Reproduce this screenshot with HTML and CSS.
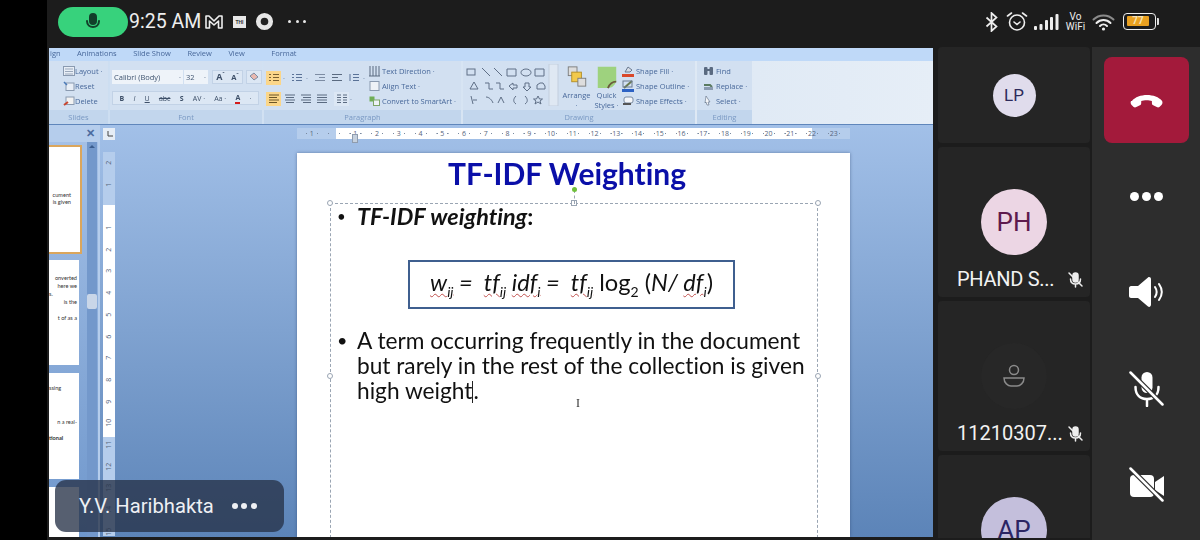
FILE: index.html
```html
<!DOCTYPE html>
<html lang="en">
<head>
<meta charset="utf-8">
<title>Meeting</title>
<link rel="stylesheet" href="styles.css">
</head>
<body>
<div class="phone">
  <div class="cutout"></div>
  <div class="main">
    <header class="status">
      <div class="status-left">
        <div class="mic-pill">
          <svg width="16" height="18" viewBox="0 0 16 18" fill="none" stroke="#123f2a" stroke-width="2" stroke-linecap="round"><rect x="5" y="1" width="6" height="10" rx="3" fill="#123f2a"/><path d="M2 8c0 4 3 6 6 6s6-2 6-6"/></svg>
        </div>
        <span class="clock">9:25 AM</span>
        <svg class="st-m" width="18" height="14" viewBox="0 0 18 14" fill="none" stroke="#eee" stroke-width="1.6" stroke-linejoin="round"><path d="M1 1h3l5 5 5-5h3v12h-3.5V6L9 10 4.500 6v7H1z"/></svg>
        <span class="st-th">THI</span>
        <svg class="st-ring" width="19" height="19" viewBox="0 0 20 20" fill="#222" stroke="#e6e6e6" stroke-width="5"><circle cx="10" cy="10" r="6.500"/></svg>
        <span class="st-dots"><i></i><i></i><i></i></span>
      </div>
      <div class="status-right">
        <svg width="14" height="20" viewBox="0 0 14 20" fill="none" stroke="#eee" stroke-width="1.700"><path d="M1.500 5.500l10 9-5 4.500V1l5 4.500-10 9"/></svg>
        <svg class="st-alarm" width="22" height="21" viewBox="0 0 22 21" fill="none" stroke="#eee" stroke-width="1.600" stroke-linecap="round"><circle cx="11" cy="11.500" r="7.500"/><path d="M8 11l3 2.500 3-2.500M1.500 5l4-3M20.500 5l-4-3"/></svg>
        <svg class="st-signal" width="25" height="17" viewBox="0 0 25 17" fill="#eee"><rect x="0" y="13" width="3" height="4" rx="1"/><rect x="5.500" y="11" width="3" height="6" rx="1"/><rect x="11" y="7" width="3" height="10" rx="1"/><rect x="16" y="4" width="3" height="13" rx="1"/><rect x="21.500" y="1" width="3" height="16" rx="1"/></svg>
        <span class="st-vo"><span>Vo</span><span>WiFi</span></span>
        <svg class="st-wifi" width="23" height="18" viewBox="0 0 23 18" fill="none" stroke-linecap="round"><path d="M1.500 6.500C7 1 16 1 21.500 6.500" stroke="#8a8a8a" stroke-width="2"/><path d="M4.500 10c4-4 10-4 14 0M8 13c2-2 5-2 7 0" stroke="#eee" stroke-width="2"/><circle cx="11.500" cy="16" r="1.600" fill="#eee"/></svg>
        <div class="battery"><div class="bat-body"><span class="bat-fill">77</span></div><i class="bat-tip"></i></div>
      </div>
    </header>

    <div class="content">
      <section class="share">
        <div class="ribbon">
          <nav class="tabs">
            <span>ign</span><span>Animations</span><span>Slide Show</span><span>Review</span><span>View</span><span class="tab-format">Format</span>
          </nav>
          <div class="groups">
            <div class="group g-slides">
              <div class="g-body rows">
                <div class="row"><svg class="ic" width="12" height="10" viewBox="0 0 12 10"><rect x=".5" y=".5" width="11" height="9" fill="#e8eef6" stroke="#8a9ab0"/><path d="M2 3h8M2 5.500h8M2 8h8" stroke="#9aa8bb"/></svg>Layout ·</div>
                <div class="row"><svg class="ic" width="12" height="10" viewBox="0 0 12 10"><rect x="3" y="2" width="8" height="7.500" fill="#e8eef6" stroke="#8a9ab0"/><path d="M1 1l3 3" stroke="#4a7ab8" stroke-width="1.500"/></svg>Reset</div>
                <div class="row"><svg class="ic" width="12" height="10" viewBox="0 0 12 10"><rect x="3" y="1" width="8" height="7.500" fill="#f2f2f2" stroke="#8a9ab0"/><path d="M1 9l4-3" stroke="#c8452f" stroke-width="2"/></svg>Delete</div>
              </div>
              <div class="g-label">Slides</div>
            </div>
            <div class="group g-font">
              <div class="g-body font-body">
                <div class="font-row">
                  <span class="combo combo-font">Calibri (Body)<b>·</b></span>
                  <span class="combo combo-size">32<b>·</b></span>
                  <span class="btnset fs"><strong>A<sup>ˆ</sup></strong><strong class="sm">A<sup>ˇ</sup></strong></span>
                  <span class="btnset clear"><svg width="12" height="12" viewBox="0 0 12 12"><path d="M2 5l4-3 4 4-4 3z" fill="#e8b8b0" stroke="#7d8ca3"/></svg></span>
                </div>
                <div class="font-row font-row2">
                  <span class="btnset fmt"><b>B</b><i>I</i><u>U</u><s>abc</s><b>S</b><span>AV ·</span><span>Aa ·</span><span class="red-a">A</span><span>·</span></span>
                </div>
              </div>
              <div class="g-label">Font</div>
            </div>
            <div class="group g-para">
              <div class="g-body para-body">
                <div class="para-left">
                  <div class="para-row">
                    <span class="pb on"><svg width="10" height="9" viewBox="0 0 10 9" stroke="#7a6030"><path d="M0 1.500h2M4 1.500h6M0 4.500h2M4 4.500h6M0 7.500h2M4 7.500h6"/></svg></span><em>·</em>
                    <span class="pb"><svg width="10" height="9" viewBox="0 0 10 9" stroke="#5a7297"><path d="M0 1.500h2M4 1.500h6M0 4.500h2M4 4.500h6M0 7.500h2M4 7.500h6"/></svg></span><em>·</em>
                    <span class="pb"><svg width="10" height="9" viewBox="0 0 10 9" stroke="#7d8ca3"><path d="M0 1.500h10M4 4.500h6M0 7.500h10"/></svg></span>
                    <span class="pb"><svg width="10" height="9" viewBox="0 0 10 9" stroke="#5a6a80"><path d="M0 1.500h10M0 4.500h6M0 7.500h10"/></svg></span>
                    <span class="pb"><svg width="10" height="9" viewBox="0 0 10 9" stroke="#5a7297"><path d="M1 1v7M4 1.500h6M4 4.500h6M4 7.500h6"/></svg></span><em>·</em>
                  </div>
                  <div class="para-row para-row2">
                    <span class="pb on"><svg width="10" height="9" viewBox="0 0 10 9" stroke="#6b5526"><path d="M0 1h10M0 3.500h8M0 6h10M0 8.500h8"/></svg></span>
                    <span class="pb"><svg width="10" height="9" viewBox="0 0 10 9" stroke="#5a6a80"><path d="M0 1h10M1 3.500h8M0 6h10M1 8.500h8"/></svg></span>
                    <span class="pb"><svg width="10" height="9" viewBox="0 0 10 9" stroke="#5a6a80"><path d="M0 1h10M2 3.500h8M0 6h10M2 8.500h8"/></svg></span>
                    <span class="pb"><svg width="10" height="9" viewBox="0 0 10 9" stroke="#5a6a80"><path d="M0 1h10M0 3.500h10M0 6h10M0 8.500h10"/></svg></span>
                    <span class="pb pb-col"><svg width="10" height="9" viewBox="0 0 10 9" stroke="#5a6a80"><path d="M0 1h4M6 1h4M0 3.500h4M6 3.500h4M0 6h4M6 6h4M0 8.500h4M6 8.500h4"/></svg></span><em>·</em>
                  </div>
                </div>
                <div class="rows">
                  <div class="row"><svg class="ic" width="11" height="12" viewBox="0 0 11 12" stroke="#5a6a80"><path d="M1 1v10M4 1v10M7 1v10M10 1v10M0 11h11"/></svg>Text Direction ·</div>
                  <div class="row"><svg class="ic" width="11" height="10" viewBox="0 0 11 10"><rect x="1" y=".5" width="9" height="9" fill="#eef2f7" stroke="#8a9ab0"/></svg>Align Text ·</div>
                  <div class="row"><svg class="ic" width="11" height="10" viewBox="0 0 11 10"><rect x=".5" y=".5" width="5" height="5" fill="#6fae56"/><rect x="4.500" y="4" width="6" height="5.500" fill="#eef2f7" stroke="#7da568"/></svg>Convert to SmartArt ·</div>
                </div>
              </div>
              <div class="g-label">Paragraph</div>
            </div>
            <div class="group g-draw">
              <div class="g-body draw-body">
                <svg class="gallery" width="94" height="42" viewBox="0 0 94 42" fill="none" stroke="#5f6f86"><rect x="2" y="5" width="8" height="6"/><path d="M17 4l8 8M29 4l8 8M42 5h9v7h-9zM56 8.500a5 3.500 0 1 0 10 0a5 3.500 0 1 0 -10 0M70 5h9v7h-9zM5 25l4-7 4 7zM20 19h4v6h4M31 19h4v6h4M44 22l4-3v2h4v3h-4v2zM60 19v4h-2l4 4 4-4h-2v-4zM72 25v-4l3-2h3l2 3v3zM6 32l2 8M8 36h4M21 33c3 0 6 3 7 6M33 39l3-6 3 6M51 32c-3 3-3 6 0 8M60 32c3 3 3 6 0 8M73 32l1.500 3h3l-2.500 2 1 3-3-2-3 2 1-3-2.500-2h3z"/><rect x="84" y="0" width="9" height="42" fill="#dfe8f3" stroke="#c2cede"/></svg>
                <div class="big"><svg width="22" height="24" viewBox="0 0 22 24"><rect x="1" y="1" width="10" height="10" fill="#ddd" stroke="#777"/><rect x="5" y="7" width="11" height="11" fill="#f2c94c" stroke="#b08a20"/><rect x="12" y="14" width="9" height="9" fill="#ddd" stroke="#777"/></svg><span>Arrange<br>·</span></div>
                <div class="big big-q"><svg width="22" height="26" viewBox="0 0 22 26"><path d="M1 2h20v16c-2 5-5 7-9 7H1z" fill="#9ed27e"/><path d="M12 25c2-5 5-7 9-7" stroke="#6a5a3c" stroke-width="2" fill="none"/></svg><span>Quick<br>Styles ·</span></div>
                <div class="rows">
                  <div class="row"><svg class="ic" width="12" height="12" viewBox="0 0 12 12"><path d="M3 7l3-5 4 3-2 2z" fill="#d8dde6" stroke="#6b7a90"/><rect y="9" width="12" height="3" fill="#d9482b"/></svg>Shape Fill ·</div>
                  <div class="row"><svg class="ic" width="12" height="12" viewBox="0 0 12 12"><path d="M2 8l8-7" stroke="#6a7a50" stroke-width="2"/><rect x="1" y="1" width="9" height="6" fill="none" stroke="#6b7a90"/><rect y="9" width="12" height="3" fill="#2d62c4"/></svg>Shape Outline ·</div>
                  <div class="row"><svg class="ic" width="12" height="10" viewBox="0 0 12 10"><rect x="2" y="1" width="9" height="6" rx="2" fill="#f4f6f9" stroke="#7a8aa0"/><path d="M1 8h8" stroke="#555" stroke-width="2"/></svg>Shape Effects ·</div>
                </div>
              </div>
              <div class="g-label">Drawing</div>
            </div>
            <div class="group g-edit">
              <div class="g-body rows">
                <div class="row"><svg class="ic" width="11" height="10" viewBox="0 0 11 10" fill="#5a6a80"><rect x="1" y="1" width="3.500" height="8" rx="1"/><rect x="6.500" y="1" width="3.500" height="8" rx="1"/><rect x="4" y="3" width="3" height="2"/></svg>Find</div>
                <div class="row"><svg class="ic" width="11" height="10" viewBox="0 0 11 10"><path d="M1 4h6l2 2" stroke="#5a7a60" stroke-width="2" fill="none"/><rect x="1" y="6" width="9" height="3" fill="#8a9ab0"/></svg>Replace ·</div>
                <div class="row"><svg class="ic" width="11" height="10" viewBox="0 0 11 10"><path d="M3 0l4 6H5l1 3-2 0-1-3-1 1z" fill="#f4f6f9" stroke="#5a6a80" stroke-width=".6"/></svg>Select ·</div>
              </div>
              <div class="g-label">Editing</div>
            </div>
          </div>
        </div>

        <div class="workspace">
          <aside class="pane">
            <div class="pane-head"><span class="pane-x">✕</span></div>
            <div class="pane-body">
              <div class="thumbs">
                <div class="thumb t1"><p class="l1">cument</p><p>is given</p></div>
                <div class="thumb t2"><p>onverted</p><p>here we</p><p class="lft">s.</p><p>is the</p><p class="l5">t of as a</p></div>
                <div class="thumb t3"><p class="lft">ssing</p><p class="l6">n a real-</p><p class="l7 lft">tional</p></div>
                <div class="thumb t4"></div>
              </div>
              <div class="scrollbar"><span class="sb-up"></span><span class="sb-handle"></span></div>
            </div>
          </aside>
          <div class="editor">
            <div class="corner"><svg width="7" height="7" viewBox="0 0 7 7" fill="none" stroke="#444"><path d="M2 0v5h5"/></svg></div>
            <div class="gap-top"></div>
            <div class="hruler">
              <span>1</span><span></span><span>1</span><span>2</span><span>3</span><span>4</span><span>5</span><span>6</span><span>7</span><span>8</span><span>9</span><span>10</span><span>11</span><span>12</span><span>13</span><span>14</span><span>15</span><span>16</span><span>17</span><span>18</span><span>19</span><span>20</span><span>21</span><span>22</span><span>23</span>
              <i class="indent"></i>
            </div>
            <div class="vruler">
              <span>2</span><span>1</span><span></span><span>1</span><span>2</span><span>3</span><span>4</span><span>5</span><span>6</span><span>7</span><span>8</span><span>9</span><span>10</span><span>11</span><span>12</span><span>13</span><span>14</span><span>15</span>
            </div>
            <div class="gap-mid"></div>
            <article class="slide">
              <h1>TF-IDF Weighting</h1>
              <div class="textbox">
                <i class="handle h-tl"></i><i class="handle h-tc"></i><i class="handle h-tr"></i><i class="handle h-ml"></i><i class="handle h-mr"></i>
                <i class="rot-line"></i><i class="rot"></i>
                <div class="bullet lead"><span>•</span><p><b><em>TF-IDF weighting</em>:</b></p></div>
                <div class="formula"><em><u>w<sub>ij</sub></u> =&nbsp; <u>tf<sub>ij</sub></u> <u>idf<sub>i</sub></u> =&nbsp; <u>tf<sub>ij</sub></u></em> log<sub>2</sub> (<em>N/ <u>df<sub>i</sub></u></em>)</div>
                <div class="bullet body-b"><span>•</span><p>A term occurring frequently in the document but rarely in the rest of the collection is given high weight<i class="caret"></i>.</p></div>
                <span class="ibeam">I</span>
              </div>
            </article>
          </div>
          <div class="name-pill"><span>Y.V. Haribhakta</span><span class="np-dots"><i></i><i></i><i></i></span></div>
        </div>
      </section>

      <section class="people">
        <div class="card card-lp"><div class="avatar av-lp">LP</div></div>
        <div class="card card-full">
          <div class="avatar av-ph">PH</div>
          <div class="name name-ph"><span>PHAND S...</span><svg width="17" height="17" viewBox="0 0 17 17" fill="none" stroke="#eee" stroke-width="1.500" stroke-linecap="round"><rect x="6" y="2" width="5" height="9" rx="2.500" fill="#eee"/><path d="M3.500 8c0 3 2 5 5 5s5-2 5-5M8.500 13v3M2 2l13 13"/></svg></div>
        </div>
        <div class="card card-full">
          <div class="avatar av-none"><svg width="22" height="24" viewBox="0 0 22 24" fill="none" stroke="#8a8a8a" stroke-width="1.500"><circle cx="11" cy="6" r="4.500"/><path d="M1 14h20c0 5-4 8-7 8H8c-3 0-7-3-7-8z"/></svg></div>
          <div class="name"><span>11210307...</span><svg width="17" height="17" viewBox="0 0 17 17" fill="none" stroke="#eee" stroke-width="1.500" stroke-linecap="round"><rect x="6" y="2" width="5" height="9" rx="2.500" fill="#eee"/><path d="M3.500 8c0 3 2 5 5 5s5-2 5-5M8.500 13v3M2 2l13 13"/></svg></div>
        </div>
        <div class="card card-last"><div class="avatar av-ap">AP</div></div>
      </section>

      <aside class="controls">
        <button class="ctl end"><svg width="34" height="16" viewBox="0 0 36 18" fill="#fff"><path d="M1 10C8 1 28 1 35 10c1 2 0 4-1 5l-2 2c-1 .6-2 .6-3 0l-4-2c-1-.6-1.500-1.500-1.500-3V10c-3-1-9-1-12 0v2c0 1.500-.5 2.400-1.500 3l-4 2c-1 .6-2 .6-3 0l-2-2c-1-1-2-3-1-5z"/></svg></button>
        <button class="ctl more"><i></i><i></i><i></i></button>
        <button class="ctl"><svg width="36" height="32" viewBox="0 0 36 32" fill="none"><path d="M2 10h7L19 1.500c1-.8 3-.5 3 2v25c0 2.500-2 2.800-3 2L9 22H2c-1 0-2-1-2-2v-8c0-1 1-2 2-2z" fill="#fff"/><path d="M26 11c2 3 2 7 0 10M30 8c3.500 5 3.500 11 0 16" stroke="#fff" stroke-width="2" stroke-linecap="round"/></svg></button>
        <button class="ctl"><svg width="36" height="36" viewBox="0 0 36 36" fill="none" stroke="#fff" stroke-width="2.500" stroke-linecap="round"><rect x="12.500" y="1" width="11" height="21" rx="5.500" fill="#fff" stroke="none"/><path d="M6.500 16c0 8 5 12 11.500 12s11.500-4 11.500-12M18 28v7"/><path d="M2 2l32 32" stroke="#2d2d2d" stroke-width="5"/><path d="M1.500 1.500l32 32"/></svg></button>
        <button class="ctl"><svg width="36" height="36" viewBox="0 0 36 36" fill="none"><rect x="1" y="8" width="24" height="22" rx="4" fill="#fff"/><path d="M26 15l9-6v20l-9-6z" fill="#fff"/><path d="M2 2l32 32" stroke="#2d2d2d" stroke-width="5"/><path d="M1.500 1.500l32 32" stroke="#fff" stroke-width="2.500" stroke-linecap="round"/></svg></button>
      </aside>
    </div>
  </div>
</div>
</body>
</html>
```

FILE: styles.css
```css
* { box-sizing: border-box; }
html, body { margin: 0; padding: 0; background: #000; }
body { width: 1200px; height: 540px; overflow: hidden; font-family: Roboto, "Liberation Sans", sans-serif; }
p, h1 { margin: 0; }

.phone { display: flex; width: 1200px; height: 540px; }
.cutout { width: 47px; flex: none; background: #000; }
.main { width: 1153px; display: flex; flex-direction: column; background: #1c1c1c; }

/* status bar */
.status { height: 47px; flex: none; display: flex; justify-content: space-between; align-items: center; padding: 0 41px 4px 11px; }
.status-left, .status-right { display: flex; align-items: center; }
.mic-pill { width: 70px; height: 30px; border-radius: 15px; background: #37d27c; display: flex; align-items: center; justify-content: center; }
.clock { margin-left: 1px; font-size: 19.500px; color: #eee; width: 76px; }
.st-th { margin-left: 10px; width: 13px; height: 12px; background: #e8e8e8; color: #333; font-size: 5px; font-weight: 700; line-height: 12px; text-align: center; }
.st-ring { margin-left: 9px; }
.st-dots { margin-left: 14px; display: flex; gap: 4.500px; }
.st-dots i { width: 3px; height: 3px; border-radius: 50%; background: #e8e8e8; }
.status-right svg { display: block; }
.st-alarm { margin-left: 7px; }
.st-signal { margin-left: 6px; }
.st-vo { margin-left: 5px; width: 23px; display: flex; flex-direction: column; align-items: center; font-size: 10px; line-height: 10px; color: #eee; }
.st-wifi { margin-left: 5px; }
.battery { margin-left: 8px; display: flex; align-items: center; }
.bat-body { width: 33px; height: 17px; border: 1.500px solid #eee; border-radius: 4px; padding: 2px; }
.bat-fill { display: block; width: 22px; height: 10px; margin-left: 1px; background: #e9a020; border-radius: 1px; color: #f7e3b4; font-size: 10px; line-height: 10px; font-weight: 700; text-align: center; }
.bat-tip { width: 2px; height: 7px; margin-left: 1px; background: #ddd; border-radius: 0 1px 1px 0; }

/* layout under the status bar */
.content { flex: 1; display: flex; min-height: 0; }
.share { width: 884px; margin: 1px 0 3px 2px; flex: none; display: flex; flex-direction: column; position: relative; overflow: hidden; background: #5f86bb; }

/* ribbon */
.ribbon { height: 76px; flex: none; font-family: "Open Sans", "Liberation Sans", sans-serif; font-size: 7.500px; color: #48689a; background: linear-gradient(90deg, #cbddf1, #dde8f4 70%, #e6eef7); filter: blur(.4px); }
.tabs { height: 13px; display: flex; gap: 16.500px; align-items: center; background: #bfd9f8; padding: 0 0 3px 1px; white-space: nowrap; }
.tab-format { margin-left: 10px; }
.groups { display: flex; height: 63px; gap: 2px; }
.group { display: flex; flex-direction: column; background: #d2e0f1; }
.g-body { height: 49px; flex: none; }
.g-label { height: 14px; background: #c2d6ed; color: #7a99c3; text-align: center; line-height: 14px; }
.g-slides { width: 59px; }
.g-slides .g-body { padding-left: 14px; }
.g-slides .row { gap: 0; }
.g-font { width: 152px; }
.g-para { width: 197px; }
.g-draw { width: 232px; }
.g-edit { width: 55px; }
.g-edit .g-body { padding-left: 6px; }
.rows { display: flex; flex-direction: column; padding-top: 2px; white-space: nowrap; }
.row { height: 15px; display: flex; align-items: center; gap: 2px; }
.ic { flex: none; }

.font-body { padding: 9px 0 0 2px; }
.font-row { display: flex; gap: 1px; height: 13px; align-items: center; }
.font-row2 { margin-top: 8px; height: 14px; }
.combo { display: flex; justify-content: space-between; align-items: center; height: 14px; padding: 0 2px; background: #eef3f9; color: #3f5470; }
.combo b { font-weight: 400; }
.combo-font { width: 71px; }
.combo-size { width: 24px; }
.btnset { display: flex; align-items: center; justify-content: space-around; height: 14px; background: #dce7f4; border: 1px solid #c2d2e6; color: #3d4f68; }
.fs { margin-left: 3px; width: 31px; font-size: 9px; }
.fs .sm { font-size: 7.500px; }
.fs sup { font-size: 5px; line-height: 0; }
.clear { margin-left: 2px; width: 16px; }
.fmt { width: 147px; padding: 0 2px; font-size: 7px; }
.red-a { border-bottom: 2px solid #d41c1c; line-height: 9px; font-weight: 700; color: #3d4f68; }

.para-body { display: flex; padding-left: 2px; }
.para-left { width: 103px; padding-top: 9px; }
.para-row { display: flex; align-items: center; height: 15px; color: #5a7297; gap: 2px; }
.para-row em { font-style: normal; width: 4px; }
.para-row2 { margin-top: 6px; gap: 1px; }
.pb { width: 15px; height: 14px; display: flex; align-items: center; justify-content: center; }
.pb.on { background: #fbd689; }
.pb-col { margin-left: 4px; background: #dce7f4; }

.draw-body { display: flex; padding-left: 2px; }
.gallery { margin: 3px 3px 0 0; flex: none; }
.big { width: 29px; flex: none; display: flex; flex-direction: column; align-items: center; text-align: center; line-height: 10px; padding-top: 5px; }
.big span { margin-top: 3px; }
.big-q { margin-left: 1px; padding-top: 4px; }
.big-q span { margin-top: 1px; }
.draw-body .rows { margin-left: 1px; }

/* workspace */
.workspace { flex: 1; min-height: 0; display: flex; position: relative; margin-top: 1px; }
.pane { width: 49px; flex: none; display: flex; flex-direction: column; background: #94b4df; }
.pane-head { height: 17px; flex: none; display: flex; justify-content: flex-end; align-items: center; padding-right: 3px; background: #b5cdec; }
.pane-x { color: #4b6b9e; font-size: 11px; font-weight: 700; line-height: 1; }
.pane-body { flex: 1; min-height: 0; display: flex; background: linear-gradient(#a4c0e6, #6f97cc); }
.thumbs { width: 38px; flex: none; }
.thumb { width: 30px; height: 105px; background: #fff; margin-bottom: 8px; font-family: Lato, sans-serif; font-size: 5.600px; color: #333; text-align: right; padding-right: 2px; overflow: hidden; white-space: nowrap; }
.thumb p { line-height: 8px; }
.thumb .lft { text-align: left; }
.t1 { width: 33px; height: 109px; margin: 3px 0 6px; border: 2px solid #dba65c; border-left: 0; padding: 45px 9px 0 0; }
.t1 p { line-height: 6.500px; }
.t2 { padding-top: 14px; }
.t3 { padding-top: 11px; height: 106px; }
.l5 { margin-top: 8px; }
.l6 { margin-top: 26px; }
.l7 { margin-top: 8px; font-weight: 700; }
.scrollbar { width: 10px; flex: none; background: #7398cb; position: relative; }
.sb-up { position: absolute; left: 2px; top: 3px; border: 3px solid transparent; border-bottom: 3px solid #3a5c8e; border-top: 0; }
.sb-handle { position: absolute; left: 0; top: 152px; width: 10px; height: 15px; border-radius: 2px; background: #c9d6e8; }

.editor { flex: 1; min-width: 0; display: grid; grid-template-columns: 12px 182px 553px; grid-template-rows: 28px 1fr; border-left: 2px solid #b5cdec; padding-left: 3px; background: linear-gradient(#a2c0e8, #5c84b8); font-family: "Open Sans", "Liberation Sans", sans-serif; }
.corner { width: 12px; height: 12px; margin-top: 3px; display: flex; align-items: center; justify-content: center; background: #e6edf6; }
.hruler { position: relative; height: 11px; margin-top: 3px; padding-left: 4px; display: flex; font-size: 7px; line-height: 11px; color: #56657c; text-align: center; background:
  linear-gradient(90deg, transparent 39px, #fff 39px, #fff 515px, transparent 515px), #b5cdec; }
.hruler span { width: 21.750px; flex: none; background: radial-gradient(circle at 25% 50%, #7a8aa0 .6px, transparent 1px), radial-gradient(circle at 75% 50%, #7a8aa0 .6px, transparent 1px); }
.indent { position: absolute; left: 55px; top: 6px; width: 6px; height: 9px; background: #c6d1de; border: 1px solid #8f9cae; }
.vruler { width: 12px; height: 384px; margin-top: -1px; display: flex; flex-direction: column; font-size: 7px; color: #56657c; background: linear-gradient(transparent 53px, #fff 53px, #fff 285px, transparent 285px), #b5cdec; }
.vruler span { height: 21.700px; flex: none; display: flex; align-items: center; justify-content: center; transform: rotate(-90deg); }

.slide { height: 384px; background: #fff; overflow: hidden; box-shadow: 0 0 3px rgba(40,60,100,.5); font-family: Lato, "Liberation Sans", sans-serif; font-variant-ligatures: none; color: #111; filter: blur(.25px); }
.slide h1 { height: 50px; padding-right: 13px; font-size: 30px; line-height: 41px; font-weight: 700; text-align: center; color: #0a0fa8; }
.textbox { position: relative; width: 488px; height: 340px; margin-left: 33px; border: 1px dashed #9aa5b3; padding: 0 12px 0 6px; }
.handle { position: absolute; width: 6px; height: 6px; border: 1px solid #9aa5b3; background: #fff; border-radius: 50%; }
.h-tl { left: -4px; top: -4px; }
.h-tc { left: 240px; top: -4px; border-radius: 0; }
.h-tr { right: -4px; top: -4px; }
.h-ml { left: -4px; top: 169px; }
.h-mr { right: -4px; top: 169px; }
.rot-line { position: absolute; left: 243px; top: -14px; height: 14px; border-left: 1px dashed #9aa5b3; }
.rot { position: absolute; left: 241px; top: -17px; width: 5px; height: 5px; border-radius: 50%; background: #6fbf3a; }
.bullet { display: flex; }
.bullet span { width: 20px; flex: none; }
.lead { font-size: 23.400px; line-height: 25px; }
.lead span { font-size: 15px; }
.formula { width: 327px; height: 49px; margin: 31px 0 0 71px; border: 2px solid #3f5f8f; font-size: 23.700px; line-height: 41px; text-align: center; white-space: nowrap; }
.formula u { text-decoration: underline wavy #c0504d 1px; text-underline-offset: 2px; }
.formula sub { font-size: 14px; line-height: 0; }
.body-b { margin-top: 19px; font-size: 22.700px; line-height: 25px; }
.body-b span { font-size: 18px; }
.caret { display: inline-block; width: 1px; height: 22px; background: #222; vertical-align: -4px; }
.ibeam { position: absolute; left: 245px; top: 192px; font-family: "Liberation Serif", serif; font-size: 12px; line-height: 14px; color: #333; }

.name-pill { position: absolute; left: 6px; bottom: 5px; width: 229px; height: 52px; border-radius: 11px; background: rgba(38,50,72,.78); display: flex; align-items: center; padding-left: 24px; color: #eef0f4; font-size: 20.200px; }
.np-dots { margin-left: 18px; display: flex; gap: 3.500px; }
.np-dots i { width: 6px; height: 6px; border-radius: 50%; background: #eef0f4; }

/* participants */
.people { width: 152px; flex: none; margin-left: 5px; display: flex; flex-direction: column; gap: 4px; overflow: hidden; height: 491px; }
.card { background: #252525; border-radius: 4px; display: flex; flex-direction: column; align-items: center; flex: none; overflow: hidden; }
.card-lp { height: 96px; justify-content: center; }
.card-full { height: 150px; padding-top: 42px; }
.card-last { height: 90px; padding-top: 42px; }
.avatar { border-radius: 50%; display: flex; align-items: center; justify-content: center; flex: none; }
.av-lp { width: 43px; height: 43px; background: #e0dcec; color: #2d2a5a; font-size: 17px; }
.av-ph { width: 66px; height: 66px; background: #ecd6e4; color: #5e1a4d; font-size: 26px; }
.av-none { width: 66px; height: 66px; background: #272727; }
.av-ap { width: 66px; height: 66px; background: #c4bfdc; color: #2b2563; font-size: 26px; }
.name { width: 100%; margin-top: 13px; padding: 0 6px 0 19px; display: flex; justify-content: space-between; align-items: center; color: #f2f2f2; font-size: 20px; line-height: 22px; white-space: nowrap; }
.name-ph { letter-spacing: -.3px; }

/* controls */
.controls { flex: 1; margin-left: 2px; background: #2d2d2d; display: flex; flex-direction: column; align-items: center; padding-top: 10px; }
.ctl { width: 85px; border: 0; padding: 0; background: none; display: flex; align-items: center; justify-content: center; flex: none; margin-left: 1px; }
.end { height: 86px; background: #a31a3b; border-radius: 8px; }
.more { height: 34px; margin-top: 36px; gap: 3px; }
.more i { width: 9px; height: 9px; border-radius: 50%; background: #fff; }
.ctl:nth-child(3) { height: 36px; margin-top: 61px; }
.ctl:nth-child(4) { height: 38px; margin-top: 60px; }
.ctl:nth-child(5) { height: 38px; margin-top: 58px; }
```
